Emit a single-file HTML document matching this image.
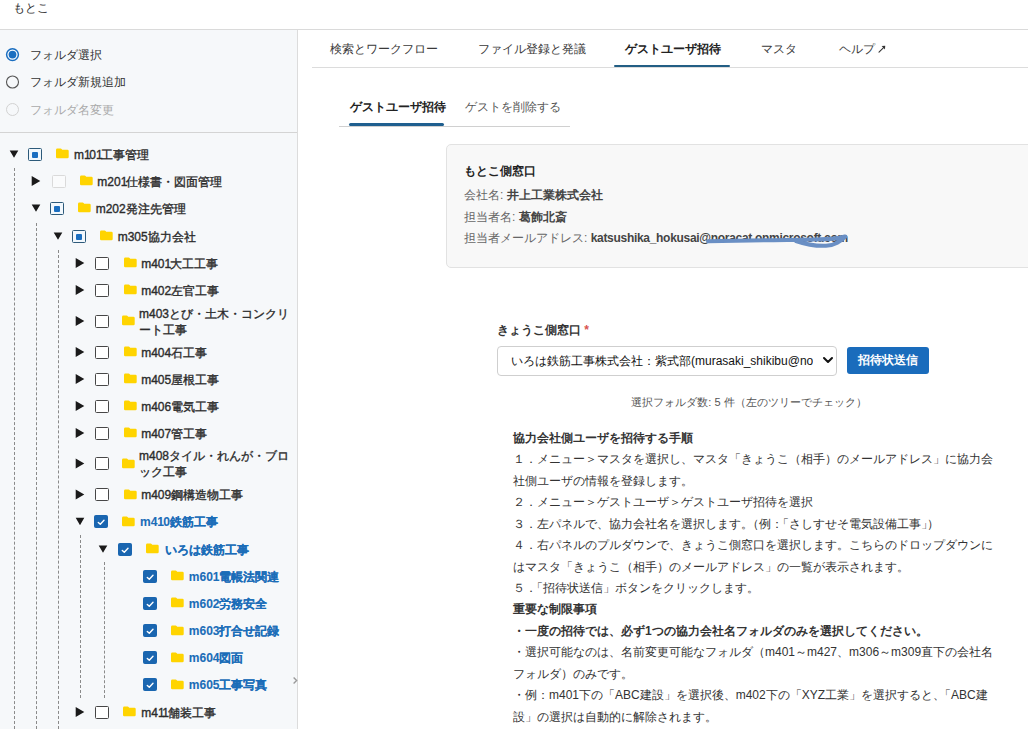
<!DOCTYPE html>
<html lang="ja">
<head>
<meta charset="utf-8">
<style>
*{box-sizing:border-box;margin:0;padding:0}
html,body{width:1028px;height:729px;overflow:hidden;background:#fff}
body{font-family:"Liberation Sans",sans-serif;font-size:12px;color:#333;position:relative}
.abs{position:absolute;white-space:nowrap}
#hdr{position:absolute;left:0;top:0;width:1028px;height:30px;border-bottom:1px solid #dadada;background:#fff}
#hdr span{position:absolute;left:13px;top:0px;font-size:12px;color:#333;line-height:16px}
#left{position:absolute;left:0;top:30px;width:298px;height:699px;background:#f6f8fa;border-right:1px solid #dcdcdc}
#radios{position:absolute;left:0;top:0;width:297px;height:103px;border-bottom:1px solid #d4d4d4}
.radio{position:absolute;left:6px;width:13.5px;height:13.5px;border-radius:50%;border:1.3px solid #555;background:#fff}
.radio.on{border:1.8px solid #1a6ec0;}
.radio.on::after{content:"";position:absolute;left:1.2px;top:1.2px;width:7.5px;height:7.5px;border-radius:50%;background:#1a6ec0}
.radio.dis{border-color:#d0d0d0;background:transparent}
.rlabel{position:absolute;left:30px;font-size:12px;line-height:16px;color:#333}
.rlabel.dis{color:#aaa}
/* tree */
.tri-d{position:absolute;width:0;height:0;border-left:4.3px solid transparent;border-right:4.3px solid transparent;border-top:7.6px solid #1b1b1b}
.tri-r{position:absolute;width:0;height:0;border-top:4.8px solid transparent;border-bottom:4.8px solid transparent;border-left:8.6px solid #1b1b1b}
.cb{position:absolute;width:13.5px;height:13px;border:1.2px solid #474747;border-radius:1.5px;background:#fff}
.cb.dis{border-color:#dadada;background:#fafbfc}
.cb.part{border-color:#2d5a7a;background:#f2f8fd}
.cb.part::after{content:"";position:absolute;left:3px;top:3px;width:6px;height:6px;background:#1a6ec0;border-radius:1px}
.cb.chk{background:#1a66b0;border-color:#1a66b0}
.fold{position:absolute;width:13px;height:11px}
.lbl{position:absolute;font-size:12px;color:#2b2b2b;-webkit-text-stroke:0.35px #2b2b2b;line-height:16px}
.lbl i{font-style:normal;letter-spacing:-1.4px}
.lbl.blue{color:#1b6db8;font-weight:bold;-webkit-text-stroke:0.1px #1b6db8}
.lbl.blue i{letter-spacing:-0.8px}
.vline{position:absolute;width:0;border-left:1px dashed #8a8a8a}
/* right */
.o{margin-left:-6px}.c{letter-spacing:-6px}
.tab{position:absolute;top:40.8px;font-size:12px;line-height:16px;color:#3a3a3a}
.tab.act{font-weight:bold;color:#222}
</style>
</head>
<body>
<div id="hdr"><span>もとこ</span></div>

<div id="left">
  <div id="radios">
    <div class="rlabel" style="top:16.5px">フォルダ選択</div>
    <div class="rlabel" style="top:44px">フォルダ新規追加</div>
    <div class="rlabel dis" style="top:71.5px">フォルダ名変更</div>
  </div>
</div>

<svg class="abs" style="left:0;top:0" width="30" height="130" viewBox="0 0 30 130">
<circle cx="12.5" cy="54.6" r="5.9" fill="#fff" stroke="#1a6ec0" stroke-width="1.5"/><circle cx="12.5" cy="54.6" r="3.9" fill="#1a6ec0"/>
<circle cx="12.5" cy="82" r="6" fill="none" stroke="#555" stroke-width="1.1"/>
<circle cx="12.5" cy="109.5" r="6" fill="none" stroke="#d2d2d2" stroke-width="1"/>
</svg>
<!--TREE-->
<svg class="abs" style="left:0;top:0" width="298" height="729" viewBox="0 0 298 729"><path d="M9.7 150.4 L18.3 150.4 L14.0 157.8 Z M31.7 176.1 L40.3 181.1 L31.7 186.0 Z M31.7 204.4 L40.3 204.4 L36.0 211.8 Z M53.7 232.4 L62.3 232.4 L58.0 239.8 Z M75.7 258.1 L84.3 263.1 L75.7 268.0 Z M75.7 285.1 L84.3 290.1 L75.7 295.0 Z M75.7 316.1 L84.3 321.1 L75.7 326.0 Z M75.7 347.1 L84.3 352.1 L75.7 357.0 Z M75.7 374.1 L84.3 379.1 L75.7 384.0 Z M75.7 401.1 L84.3 406.1 L75.7 411.0 Z M75.7 428.1 L84.3 433.1 L75.7 438.0 Z M75.7 458.5 L84.3 463.5 L75.7 468.4 Z M75.7 489.6 L84.3 494.6 L75.7 499.5 Z M75.7 517.8 L84.3 517.8 L80.0 525.2 Z M98.7 545.4 L107.3 545.4 L103.0 552.8 Z M75.7 707.1 L84.3 712.1 L75.7 717.0 Z" fill="#1a1a1a"/></svg>
<div class="cb part" style="left:28px;top:147.7px"></div>
<svg class="fold" style="left:56.2px;top:148.4px" width="13" height="10" viewBox="0 0 13 10"><path d="M0 1.4 Q0 0 1.4 0 H4.6 Q5.2 0 5.6 0.5 L6.2 1.2 H11.4 Q12.7 1.2 12.7 2.5 V8.4 Q12.7 9.7 11.4 9.7 H1.3 Q0 9.7 0 8.4 Z" fill="#ffd400"/></svg>
<div class="lbl" style="left:74px;top:146.5px">m<i>1</i>0<i>1</i>工事管理</div>
<div class="cb dis" style="left:52px;top:174.7px"></div>
<svg class="fold" style="left:79.7px;top:175.4px" width="13" height="10" viewBox="0 0 13 10"><path d="M0 1.4 Q0 0 1.4 0 H4.6 Q5.2 0 5.6 0.5 L6.2 1.2 H11.4 Q12.7 1.2 12.7 2.5 V8.4 Q12.7 9.7 11.4 9.7 H1.3 Q0 9.7 0 8.4 Z" fill="#ffd400"/></svg>
<div class="lbl" style="left:97.3px;top:173.5px">m20<i>1</i>仕様書・図面管理</div>
<div class="cb part" style="left:50px;top:201.7px"></div>
<svg class="fold" style="left:77.7px;top:202.4px" width="13" height="10" viewBox="0 0 13 10"><path d="M0 1.4 Q0 0 1.4 0 H4.6 Q5.2 0 5.6 0.5 L6.2 1.2 H11.4 Q12.7 1.2 12.7 2.5 V8.4 Q12.7 9.7 11.4 9.7 H1.3 Q0 9.7 0 8.4 Z" fill="#ffd400"/></svg>
<div class="lbl" style="left:95.7px;top:200.5px">m202発注先管理</div>
<div class="cb part" style="left:72px;top:229.7px"></div>
<svg class="fold" style="left:100.3px;top:230.4px" width="13" height="10" viewBox="0 0 13 10"><path d="M0 1.4 Q0 0 1.4 0 H4.6 Q5.2 0 5.6 0.5 L6.2 1.2 H11.4 Q12.7 1.2 12.7 2.5 V8.4 Q12.7 9.7 11.4 9.7 H1.3 Q0 9.7 0 8.4 Z" fill="#ffd400"/></svg>
<div class="lbl" style="left:117.7px;top:228.5px">m305協力会社</div>
<div class="cb" style="left:95px;top:256.7px"></div>
<svg class="fold" style="left:123.7px;top:257.4px" width="13" height="10" viewBox="0 0 13 10"><path d="M0 1.4 Q0 0 1.4 0 H4.6 Q5.2 0 5.6 0.5 L6.2 1.2 H11.4 Q12.7 1.2 12.7 2.5 V8.4 Q12.7 9.7 11.4 9.7 H1.3 Q0 9.7 0 8.4 Z" fill="#ffd400"/></svg>
<div class="lbl" style="left:141.2px;top:255.5px">m40<i>1</i>大工工事</div>
<div class="cb" style="left:95px;top:283.7px"></div>
<svg class="fold" style="left:123.7px;top:284.4px" width="13" height="10" viewBox="0 0 13 10"><path d="M0 1.4 Q0 0 1.4 0 H4.6 Q5.2 0 5.6 0.5 L6.2 1.2 H11.4 Q12.7 1.2 12.7 2.5 V8.4 Q12.7 9.7 11.4 9.7 H1.3 Q0 9.7 0 8.4 Z" fill="#ffd400"/></svg>
<div class="lbl" style="left:141.2px;top:282.5px">m402左官工事</div>
<div class="cb" style="left:95px;top:314.7px"></div>
<svg class="fold" style="left:121.7px;top:315.4px" width="13" height="10" viewBox="0 0 13 10"><path d="M0 1.4 Q0 0 1.4 0 H4.6 Q5.2 0 5.6 0.5 L6.2 1.2 H11.4 Q12.7 1.2 12.7 2.5 V8.4 Q12.7 9.7 11.4 9.7 H1.3 Q0 9.7 0 8.4 Z" fill="#ffd400"/></svg>
<div class="lbl" style="left:139px;top:305.5px">m403とび・土木・コンクリ<br>ート工事</div>
<div class="cb" style="left:95px;top:345.7px"></div>
<svg class="fold" style="left:123.7px;top:346.4px" width="13" height="10" viewBox="0 0 13 10"><path d="M0 1.4 Q0 0 1.4 0 H4.6 Q5.2 0 5.6 0.5 L6.2 1.2 H11.4 Q12.7 1.2 12.7 2.5 V8.4 Q12.7 9.7 11.4 9.7 H1.3 Q0 9.7 0 8.4 Z" fill="#ffd400"/></svg>
<div class="lbl" style="left:141.2px;top:344.5px">m404石工事</div>
<div class="cb" style="left:95px;top:372.7px"></div>
<svg class="fold" style="left:123.7px;top:373.4px" width="13" height="10" viewBox="0 0 13 10"><path d="M0 1.4 Q0 0 1.4 0 H4.6 Q5.2 0 5.6 0.5 L6.2 1.2 H11.4 Q12.7 1.2 12.7 2.5 V8.4 Q12.7 9.7 11.4 9.7 H1.3 Q0 9.7 0 8.4 Z" fill="#ffd400"/></svg>
<div class="lbl" style="left:141.2px;top:371.5px">m405屋根工事</div>
<div class="cb" style="left:95px;top:399.7px"></div>
<svg class="fold" style="left:123.7px;top:400.4px" width="13" height="10" viewBox="0 0 13 10"><path d="M0 1.4 Q0 0 1.4 0 H4.6 Q5.2 0 5.6 0.5 L6.2 1.2 H11.4 Q12.7 1.2 12.7 2.5 V8.4 Q12.7 9.7 11.4 9.7 H1.3 Q0 9.7 0 8.4 Z" fill="#ffd400"/></svg>
<div class="lbl" style="left:141.2px;top:398.5px">m406電気工事</div>
<div class="cb" style="left:95px;top:426.7px"></div>
<svg class="fold" style="left:123.7px;top:427.4px" width="13" height="10" viewBox="0 0 13 10"><path d="M0 1.4 Q0 0 1.4 0 H4.6 Q5.2 0 5.6 0.5 L6.2 1.2 H11.4 Q12.7 1.2 12.7 2.5 V8.4 Q12.7 9.7 11.4 9.7 H1.3 Q0 9.7 0 8.4 Z" fill="#ffd400"/></svg>
<div class="lbl" style="left:141.2px;top:425.5px">m407管工事</div>
<div class="cb" style="left:95px;top:457.1px"></div>
<svg class="fold" style="left:121.7px;top:457.8px" width="13" height="10" viewBox="0 0 13 10"><path d="M0 1.4 Q0 0 1.4 0 H4.6 Q5.2 0 5.6 0.5 L6.2 1.2 H11.4 Q12.7 1.2 12.7 2.5 V8.4 Q12.7 9.7 11.4 9.7 H1.3 Q0 9.7 0 8.4 Z" fill="#ffd400"/></svg>
<div class="lbl" style="left:139px;top:447.9px">m408タイル・れんが・ブロ<br>ック工事</div>
<div class="cb" style="left:95px;top:488.2px"></div>
<svg class="fold" style="left:123.7px;top:488.9px" width="13" height="10" viewBox="0 0 13 10"><path d="M0 1.4 Q0 0 1.4 0 H4.6 Q5.2 0 5.6 0.5 L6.2 1.2 H11.4 Q12.7 1.2 12.7 2.5 V8.4 Q12.7 9.7 11.4 9.7 H1.3 Q0 9.7 0 8.4 Z" fill="#ffd400"/></svg>
<div class="lbl" style="left:141.2px;top:487.0px">m409鋼構造物工事</div>
<div class="cb chk" style="left:94.2px;top:515.1px"><svg width="14" height="14" viewBox="0 0 14 14" style="position:absolute;left:-1px;top:-1px"><path d="M4.3 7.4 L6.3 9.3 L10 5.3" fill="none" stroke="#fff" stroke-width="1.4" stroke-linecap="round" stroke-linejoin="round"/></svg></div>
<svg class="fold" style="left:121.8px;top:515.8px" width="13" height="10" viewBox="0 0 13 10"><path d="M0 1.4 Q0 0 1.4 0 H4.6 Q5.2 0 5.6 0.5 L6.2 1.2 H11.4 Q12.7 1.2 12.7 2.5 V8.4 Q12.7 9.7 11.4 9.7 H1.3 Q0 9.7 0 8.4 Z" fill="#ffd400"/></svg>
<div class="lbl blue" style="left:140px;top:513.9px">m4<i>1</i>0鉄筋工事</div>
<div class="cb chk" style="left:118.2px;top:542.7px"><svg width="14" height="14" viewBox="0 0 14 14" style="position:absolute;left:-1px;top:-1px"><path d="M4.3 7.4 L6.3 9.3 L10 5.3" fill="none" stroke="#fff" stroke-width="1.4" stroke-linecap="round" stroke-linejoin="round"/></svg></div>
<svg class="fold" style="left:145.7px;top:543.4px" width="13" height="10" viewBox="0 0 13 10"><path d="M0 1.4 Q0 0 1.4 0 H4.6 Q5.2 0 5.6 0.5 L6.2 1.2 H11.4 Q12.7 1.2 12.7 2.5 V8.4 Q12.7 9.7 11.4 9.7 H1.3 Q0 9.7 0 8.4 Z" fill="#ffd400"/></svg>
<div class="lbl blue" style="left:164.5px;top:541.5px">いろは鉄筋工事</div>
<div class="cb chk" style="left:143.2px;top:569.7px"><svg width="14" height="14" viewBox="0 0 14 14" style="position:absolute;left:-1px;top:-1px"><path d="M4.3 7.4 L6.3 9.3 L10 5.3" fill="none" stroke="#fff" stroke-width="1.4" stroke-linecap="round" stroke-linejoin="round"/></svg></div>
<svg class="fold" style="left:171.0px;top:570.4px" width="13" height="10" viewBox="0 0 13 10"><path d="M0 1.4 Q0 0 1.4 0 H4.6 Q5.2 0 5.6 0.5 L6.2 1.2 H11.4 Q12.7 1.2 12.7 2.5 V8.4 Q12.7 9.7 11.4 9.7 H1.3 Q0 9.7 0 8.4 Z" fill="#ffd400"/></svg>
<div class="lbl blue" style="left:188.8px;top:568.5px">m60<i>1</i>電帳法関連</div>
<div class="cb chk" style="left:143.2px;top:596.7px"><svg width="14" height="14" viewBox="0 0 14 14" style="position:absolute;left:-1px;top:-1px"><path d="M4.3 7.4 L6.3 9.3 L10 5.3" fill="none" stroke="#fff" stroke-width="1.4" stroke-linecap="round" stroke-linejoin="round"/></svg></div>
<svg class="fold" style="left:171.0px;top:597.4px" width="13" height="10" viewBox="0 0 13 10"><path d="M0 1.4 Q0 0 1.4 0 H4.6 Q5.2 0 5.6 0.5 L6.2 1.2 H11.4 Q12.7 1.2 12.7 2.5 V8.4 Q12.7 9.7 11.4 9.7 H1.3 Q0 9.7 0 8.4 Z" fill="#ffd400"/></svg>
<div class="lbl blue" style="left:188.8px;top:595.5px">m602労務安全</div>
<div class="cb chk" style="left:143.2px;top:624.0px"><svg width="14" height="14" viewBox="0 0 14 14" style="position:absolute;left:-1px;top:-1px"><path d="M4.3 7.4 L6.3 9.3 L10 5.3" fill="none" stroke="#fff" stroke-width="1.4" stroke-linecap="round" stroke-linejoin="round"/></svg></div>
<svg class="fold" style="left:171.0px;top:624.7px" width="13" height="10" viewBox="0 0 13 10"><path d="M0 1.4 Q0 0 1.4 0 H4.6 Q5.2 0 5.6 0.5 L6.2 1.2 H11.4 Q12.7 1.2 12.7 2.5 V8.4 Q12.7 9.7 11.4 9.7 H1.3 Q0 9.7 0 8.4 Z" fill="#ffd400"/></svg>
<div class="lbl blue" style="left:188.8px;top:622.8px">m603打合せ記録</div>
<div class="cb chk" style="left:143.2px;top:651.2px"><svg width="14" height="14" viewBox="0 0 14 14" style="position:absolute;left:-1px;top:-1px"><path d="M4.3 7.4 L6.3 9.3 L10 5.3" fill="none" stroke="#fff" stroke-width="1.4" stroke-linecap="round" stroke-linejoin="round"/></svg></div>
<svg class="fold" style="left:171.0px;top:651.9px" width="13" height="10" viewBox="0 0 13 10"><path d="M0 1.4 Q0 0 1.4 0 H4.6 Q5.2 0 5.6 0.5 L6.2 1.2 H11.4 Q12.7 1.2 12.7 2.5 V8.4 Q12.7 9.7 11.4 9.7 H1.3 Q0 9.7 0 8.4 Z" fill="#ffd400"/></svg>
<div class="lbl blue" style="left:188.8px;top:650.0px">m604図面</div>
<div class="cb chk" style="left:143.2px;top:678.3px"><svg width="14" height="14" viewBox="0 0 14 14" style="position:absolute;left:-1px;top:-1px"><path d="M4.3 7.4 L6.3 9.3 L10 5.3" fill="none" stroke="#fff" stroke-width="1.4" stroke-linecap="round" stroke-linejoin="round"/></svg></div>
<svg class="fold" style="left:171.0px;top:679.0px" width="13" height="10" viewBox="0 0 13 10"><path d="M0 1.4 Q0 0 1.4 0 H4.6 Q5.2 0 5.6 0.5 L6.2 1.2 H11.4 Q12.7 1.2 12.7 2.5 V8.4 Q12.7 9.7 11.4 9.7 H1.3 Q0 9.7 0 8.4 Z" fill="#ffd400"/></svg>
<div class="lbl blue" style="left:188.8px;top:677.1px">m605工事写真</div>
<div class="cb" style="left:95.3px;top:705.7px"></div>
<svg class="fold" style="left:123.4px;top:706.4px" width="13" height="10" viewBox="0 0 13 10"><path d="M0 1.4 Q0 0 1.4 0 H4.6 Q5.2 0 5.6 0.5 L6.2 1.2 H11.4 Q12.7 1.2 12.7 2.5 V8.4 Q12.7 9.7 11.4 9.7 H1.3 Q0 9.7 0 8.4 Z" fill="#ffd400"/></svg>
<div class="lbl" style="left:141.3px;top:704.5px">m4<i>1</i><i>1</i>舗装工事</div>
<div class="vline" style="left:14.0px;top:167.5px;height:561.5px"></div>
<div class="vline" style="left:36.0px;top:222.5px;height:506.5px"></div>
<div class="vline" style="left:58.0px;top:249.5px;height:479.5px"></div>
<div class="vline" style="left:80.0px;top:534.5px;height:163.5px"></div>
<div class="vline" style="left:104.0px;top:561.5px;height:136.5px"></div>
<!--/TREE-->
<svg class="abs" style="left:292px;top:676px" width="6" height="9" viewBox="0 0 6 9"><path d="M1.6 1.6 L4.6 4.5 L1.6 7.4" fill="none" stroke="#9a9a9a" stroke-width="1.4"/></svg>
<!-- tabs -->
<div class="abs" style="left:312px;top:67px;width:716px;height:1px;background:#dcdcdc"></div>
<div class="tab" style="left:330px">検索とワークフロー</div>
<div class="tab" style="left:478px">ファイル登録と発議</div>
<div class="tab act" style="left:625px">ゲストユーザ招待</div>
<div class="tab" style="left:761px">マスタ</div>
<div class="tab" style="left:839px">ヘルプ</div>
<svg class="abs" style="left:877px;top:44px" width="10" height="10" viewBox="0 0 10 10"><path d="M2 8.2 L7.6 2.6" stroke="#333" stroke-width="1.1" stroke-linecap="round"/><path d="M4.6 2 L8.2 1.8 L8 5.4 Z" fill="#333"/></svg>
<div class="abs" style="left:614px;top:65px;width:116px;height:2.4px;background:#225e84;border-radius:1px"></div>

<!-- subtabs -->
<div class="abs" style="left:339px;top:126px;width:231px;height:1px;background:#d0d0d0"></div>
<div class="abs" style="left:350px;top:99px;font-weight:bold;color:#222;line-height:16px">ゲストユーザ招待</div>
<div class="abs" style="left:465px;top:99px;color:#555;line-height:16px">ゲストを削除する</div>
<div class="abs" style="left:349px;top:123px;width:95px;height:2.8px;background:#1f5f8f;border-radius:1.5px"></div>

<!-- card -->
<div class="abs" style="left:446px;top:144px;width:600px;height:124px;background:#f8f8f8;border:1px solid #e2e2e2;border-radius:5px"></div>
<div class="abs" style="left:464px;top:163px;font-weight:bold;color:#222;line-height:16px">もとこ側窓口</div>
<div class="abs" style="left:464px;top:187px;color:#666;line-height:16px">会社名: <b style="color:#444">井上工業株式会社</b></div>
<div class="abs" style="left:464px;top:209px;color:#666;line-height:16px">担当者名: <b style="color:#444">葛飾北斎</b></div>
<div class="abs" style="left:464px;top:230px;color:#666;line-height:16px">担当者メールアドレス: <b style="color:#444;letter-spacing:-0.3px">katsushika_hokusai@noracat.onmicrosoft.com</b></div>
<svg class="abs" style="left:0;top:0" width="1028" height="729" viewBox="0 0 1028 729"><path d="M708 241.2 C740 240.8 780 240 815 239.5 C830 239.2 840 238.3 845 236.5 M796 241 C806 244.5 815 246.2 826 245.8 C836 245.3 841 240.5 845 237" fill="none" stroke="#6a8fc4" stroke-width="4" stroke-linecap="round"/></svg>

<!-- form -->
<div class="abs" style="left:497px;top:322px;font-weight:bold;color:#333;line-height:16px">きょうこ側窓口 <span style="color:#d9534f">*</span></div>
<div class="abs" style="left:497px;top:346px;width:340px;height:30px;border:1px solid #cfcfcf;border-radius:4px;background:#fff"></div>
<div class="abs" style="left:511px;top:353px;font-size:12px;color:#111;line-height:16px;width:302px;overflow:hidden">いろは鉄筋工事株式会社：紫式部(murasaki_shikibu@noracat.onmicrosoft.com)</div>
<svg class="abs" style="left:822px;top:356px" width="12" height="9" viewBox="0 0 12 9"><path d="M2 2 L6 6 L10 2" fill="none" stroke="#111" stroke-width="2" stroke-linecap="round" stroke-linejoin="round"/></svg>
<div class="abs" style="left:847px;top:347px;width:82px;height:27px;background:#1a6cbc;border-radius:3px;color:#fff;font-weight:bold;text-align:center;line-height:27px">招待状送信</div>
<div class="abs" style="left:497px;top:394px;width:504px;text-align:center;color:#555;font-size:11px;line-height:16px">選択フォルダ数: 5 件（左のツリーでチェック）</div>

<!-- instructions -->
<div class="abs" id="inst" style="left:513px;top:427.8px;width:490px;white-space:normal;color:#333;line-height:21.45px">
<div><b>協力会社側ユーザを招待する手順</b></div>
<div>１．メニュー＞マスタを選択し、マスタ「きょうこ（相手）のメールアドレス」に協力会社側ユーザの情報を登録します。</div>
<div>２．メニュー＞ゲストユーザ＞ゲストユーザ招待を選択</div>
<div>３．左パネルで、協力会社名を選択します。<span class="o">（</span>例：<span class="o">「</span>さしすせそ電気設備工事<span class="c">」</span>）</div>
<div>４．右パネルのプルダウンで、きょうこ側窓口を選択します。こちらのドロップダウンにはマスタ「きょうこ（相手）のメールアドレス」の一覧が表示されます。</div>
<div>５．<span class="o">「</span>招待状送信」ボタンをクリックします。</div>
<div><b>重要な制限事項</b></div>
<div><b>・一度の招待では、必ず1つの協力会社名フォルダのみを選択してください。</b></div>
<div>・選択可能なのは、名前変更可能なフォルダ（m401～m427、m306～m309直下の会社名フォルダ）のみです。</div>
<div>・例：m401下の「ABC建設」を選択後、m402下の「XYZ工業」を選択すると、<span class="o">「</span>ABC建設」の選択は自動的に解除されます。</div>
</div>

</body>
</html>
